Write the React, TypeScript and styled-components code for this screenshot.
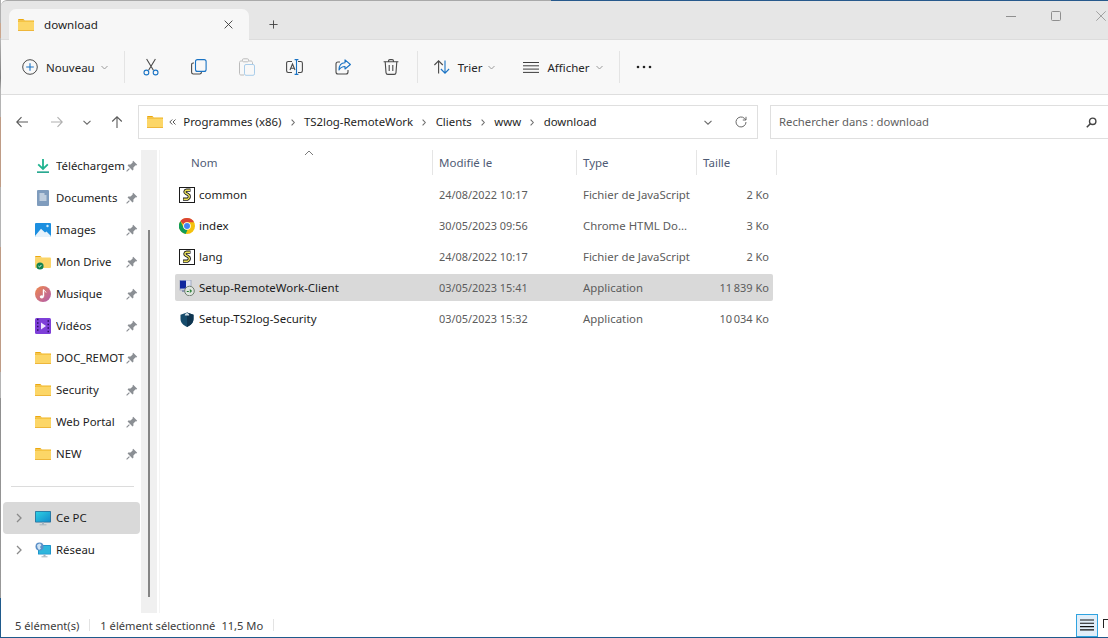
import React from 'react';
import styled, { createGlobalStyle } from 'styled-components';

const GlobalStyle = createGlobalStyle`
  html, body {
    margin: 0;
    padding: 0;
    height: 100%;
    overflow: hidden;
    background: #fff;
  }
  #root {
    height: 100%;
  }
`;

const FONT = `"Noto Sans", "Open Sans", "Liberation Sans", sans-serif`;

/* ---------- icons ---------- */

const Svg = styled.svg`
  display: block;
  flex: none;
`;

function FolderIcon() {
  return (
    <Svg width="16" height="16" viewBox="0 0 16 16">
      <path d="M0 3.200C0 2.500.5 2 1.200 2h3.600c.4 0 .7.2 1 .4L7 3.500H0z" fill="#eda90c" />
      <rect x="0" y="3.500" width="16" height="1.600" fill="#efb320" />
      <rect x="0" y="4.600" width="16" height="9.400" rx="1" fill="#fcd667" />
      <rect x="0" y="13" width="16" height="1" fill="#eeb63a" />
    </Svg>
  );
}

function DownloadIcon() {
  return (
    <Svg width="16" height="16" viewBox="0 0 16 16">
      <path d="M8 1v9.500M3.200 6.400 8 11l4.800-4.600" fill="none" stroke="#1fb38f" strokeWidth="1.800" />
      <rect x="2" y="13.400" width="12" height="1.500" fill="#13a085" />
    </Svg>
  );
}

function DocIcon() {
  return (
    <Svg width="16" height="16" viewBox="0 0 16 16">
      <rect x="2" y="0" width="12" height="16" rx="1" fill="#7f9cbd" />
      <path d="M4.500 4h5M4.500 6h7M4.500 8h7M4.500 10h7" stroke="#fff" strokeWidth="1" />
    </Svg>
  );
}

function ImageIcon() {
  return (
    <Svg width="16" height="16" viewBox="0 0 16 16">
      <rect x="0" y="1" width="16" height="14" rx="1" fill="#1c8fe0" />
      <path d="M0 14 6 6.800 10 10.500 11.500 9.400 16 14v.2c0 .5-.4.8-.8.8H.8C.4 15 0 14.700 0 14.200z" fill="#e8f3fb" />
      <circle cx="12.500" cy="4" r="1.200" fill="#d6ecfa" />
    </Svg>
  );
}

function DriveIcon() {
  return (
    <Svg width="16" height="16" viewBox="0 0 16 16">
      <path d="M0 3.200C0 2.500.5 2 1.200 2h3.600c.4 0 .7.2 1 .4L7 3.500H0z" fill="#eda90c" />
      <rect x="0" y="3.500" width="16" height="10.500" rx="1" fill="#fbd569" />
      <circle cx="5" cy="12" r="3.600" fill="#12824f" />
      <path d="M3.400 12l1.100 1.100 2-2.200" fill="none" stroke="#d8f2e3" strokeWidth="1" />
    </Svg>
  );
}

function MusicIcon() {
  return (
    <Svg width="16" height="16" viewBox="0 0 16 16">
      <defs>
        <linearGradient id="musicGrad" x1="0" y1="0" x2="1" y2="1">
          <stop offset="0" stopColor="#f0894a" />
          <stop offset="1" stopColor="#b05bb0" />
        </linearGradient>
      </defs>
      <circle cx="8" cy="8" r="8" fill="url(#musicGrad)" />
      <path d="M8.500 3.500v7" stroke="#fff" strokeWidth="1.400" />
      <path d="M8.500 3.500c.6 1.600 2.200 1.500 2.500 3" fill="none" stroke="#fff" strokeWidth="1" />
      <ellipse cx="6.800" cy="10.800" rx="2" ry="1.600" fill="#fff" />
    </Svg>
  );
}

function VideoIcon() {
  return (
    <Svg width="16" height="16" viewBox="0 0 16 16">
      <rect x="0" y="0" width="16" height="16" rx="1.500" fill="#7e3fd8" />
      <path d="M2 1.500h1.500M2 5h1.500M2 8.500h1.500M2 12h1.500M12.500 3h1.500M12.500 6.500h1.500M12.500 10h1.500M12.500 13.500h1.500" stroke="#2b0f60" strokeWidth="1.500" />
      <path d="M6 4.500v7L11 8z" fill="#efe4ff" />
    </Svg>
  );
}

function PinIcon() {
  return (
    <Svg width="12" height="12" viewBox="0 0 12 12">
      <path d="M7.200.8 11.200 4.800 10.300 5.500 9.600 5.300 7.400 7.500 7.400 9.700 6.500 10.400 1.600 5.500 2.300 4.600 4.500 4.600 6.700 2.400 6.500 1.700z" fill="#8b8f94" />
      <path d="M3.400 8.600.6 11.400" stroke="#8b8f94" strokeWidth="1.200" />
    </Svg>
  );
}

function MonitorIcon() {
  return (
    <Svg width="16" height="16" viewBox="0 0 16 16">
      <defs>
        <linearGradient id="screenGrad" x1="0" y1="0" x2="1" y2="1">
          <stop offset="0" stopColor="#2dd0e3" />
          <stop offset="1" stopColor="#138ccc" />
        </linearGradient>
      </defs>
      <rect x="0" y="1" width="16" height="11.500" rx=".8" fill="#2c6f99" />
      <rect x=".8" y="1.800" width="14.400" height="9.900" fill="url(#screenGrad)" />
      <rect x="7" y="12.500" width="2" height="2" fill="#9fb4c2" />
      <rect x="4.500" y="14.300" width="7" height="1" fill="#a5b4bd" />
    </Svg>
  );
}

function NetworkIcon() {
  return (
    <Svg width="16" height="16" viewBox="0 0 16 16">
      <rect x="3" y="3" width="13" height="9.500" rx=".6" fill="#1b8fc9" />
      <rect x="3.800" y="3.800" width="11.400" height="8" fill="#2fb6dc" />
      <rect x="8.500" y="12.500" width="2" height="2" fill="#9fb4c2" />
      <rect x="6.500" y="14.300" width="6" height="1" fill="#a5b4bd" />
      <circle cx="4.500" cy="4.500" r="4" fill="#5b8fc7" />
      <path d="M2 3c1-1 2-1.500 3-1.500L6.500 3 5 5 6 6.500 4 8 2.500 6z" fill="#cfe3f4" />
    </Svg>
  );
}

function ChevronRight() {
  return (
    <Svg width="8" height="10" viewBox="0 0 8 10">
      <path d="M2 1l4 4-4 4" fill="none" stroke="#8a8a8a" strokeWidth="1.300" />
    </Svg>
  );
}

function ScriptIcon() {
  return (
    <Svg width="16" height="16" viewBox="0 0 16 16">
      <rect x=".5" y=".5" width="15" height="15" fill="#fff" stroke="#1b1b1b" />
      <path d="M11.500 3.200H7.500C5.800 3.200 5.300 5.600 7 6.400l2.200 1.200C11 8.500 10.500 11.600 8.500 12.200H4" fill="none" stroke="#1b1b1b" strokeWidth="3.200" />
      <path d="M11 3.200H7.500C5.800 3.200 5.300 5.600 7 6.400l2.200 1.200C11 8.500 10.500 11.600 8.500 12.200H4.500" fill="none" stroke="#efe35a" strokeWidth="1.400" />
    </Svg>
  );
}

function ChromeIcon() {
  return (
    <Svg width="16" height="16" viewBox="0 0 16 16">
      <circle cx="8" cy="8" r="8" fill="#f4c20d" />
      <path d="M8 0a8 8 0 0 1 7 4.200H8A3.800 3.800 0 0 0 4.600 6.300L1.400 3.200A8 8 0 0 1 8 0z" fill="#db4437" />
      <path d="M1.400 3.200 4.600 9.500A3.800 3.800 0 0 0 8.500 11.800L6.700 15.900A8 8 0 0 1 1.400 3.200z" fill="#0f9d58" />
      <circle cx="8" cy="8" r="3.800" fill="#fff" />
      <circle cx="8" cy="8" r="3" fill="#4285f4" />
    </Svg>
  );
}

function ClientIcon() {
  return (
    <Svg width="16" height="16" viewBox="0 0 16 16">
      <rect x="1" y="0" width="11" height="10" fill="#dfe4f2" stroke="#8d97b5" strokeWidth=".7" />
      <rect x="1" y=".6" width="6" height="8" fill="#10289e" />
      <rect x="3" y="10" width="6" height="2" fill="#8d97b5" />
      <circle cx="10.500" cy="11" r="4.800" fill="#dfe5df" stroke="#6f7c6f" />
      <path d="M7.800 11.500h2M10.800 9.600l1.500 1.400-1.500 1.400" fill="none" stroke="#1d7a2a" strokeWidth="1.100" />
    </Svg>
  );
}

function ShieldIcon() {
  return (
    <Svg width="16" height="16" viewBox="0 0 16 16">
      <path d="M8 1.500 14.500 3.800V8c0 3.600-2.800 6.400-6.500 8-3.700-1.600-6.500-4.400-6.500-8V3.800z" fill="#164c6c" />
      <path d="M8 1.500 14.500 3.800V8c0 3.600-2.800 6.400-6.500 8z" fill="#0f3550" />
      <path d="M5.800 4.500C5.800 1 10.200 1 10.200 4.500z" fill="#d5e2ea" />
    </Svg>
  );
}

const Stroke = styled.g`
  fill: none;
  stroke: #4a4a4a;
  stroke-width: 1.100;
`;

const Accent = styled.g`
  fill: none;
  stroke: #1a73c4;
  stroke-width: 1.100;
`;

function NewIcon() {
  return (
    <Svg width="16" height="16" viewBox="0 0 16 16">
      <circle cx="8" cy="8" r="7.300" fill="none" stroke="#4a4a4a" strokeWidth="1" />
      <Accent>
        <path d="M8 4.200v7.600M4.200 8h7.600" />
      </Accent>
    </Svg>
  );
}

function CutIcon() {
  return (
    <Svg width="16" height="18" viewBox="0 0 16 18">
      <Stroke>
        <path d="M3.600 1 10.400 12.200M12.400 1 5.600 12.200" />
      </Stroke>
      <Accent>
        <circle cx="3.400" cy="14.500" r="2.400" />
        <circle cx="12.600" cy="14.500" r="2.400" />
      </Accent>
    </Svg>
  );
}

function CopyIcon() {
  return (
    <Svg width="16" height="16" viewBox="0 0 16 16">
      <Stroke>
        <path d="M3 4H2.300C1.300 4 .6 4.700.6 5.700v7.600c0 1 .7 1.700 1.700 1.700h6.400c1 0 1.700-.7 1.700-1.700V13" />
      </Stroke>
      <Accent>
        <rect x="4.500" y=".6" width="10.600" height="11.800" rx="2" />
      </Accent>
    </Svg>
  );
}

function PasteIcon() {
  return (
    <Svg width="16" height="18" viewBox="0 0 16 18">
      <g fill="none" stroke="#bcbcbc" strokeWidth="1">
        <path d="M3 3H2C1 3 .5 3.600.5 4.500v11C.5 16.400 1 17 2 17h3" />
        <path d="M10 3h2c.8 0 1.400.6 1.500 1.500V6" />
        <rect x="3.500" y=".8" width="6" height="3" rx="1" />
      </g>
      <rect x="5.500" y="6.500" width="10" height="10.800" rx="1.500" fill="none" stroke="#a9cdea" strokeWidth="1" />
    </Svg>
  );
}

function RenameIcon() {
  return (
    <Svg width="17" height="16" viewBox="0 0 17 16">
      <Stroke>
        <path d="M6 2.500H2.200C1.200 2.500.6 3.200.6 4.200v7.600c0 1 .6 1.700 1.600 1.700H6M12 2.500h2.800c1 0 1.600.7 1.600 1.700v7.600c0 1-.6 1.700-1.600 1.700H12" />
        <path d="M4 11 6.500 5l2.500 6M4.800 9.200h3.400" />
      </Stroke>
      <Accent>
        <path d="M10.500.6v14.800M8.600.6h3.800M8.600 15.400h3.800" />
      </Accent>
    </Svg>
  );
}

function ShareIcon() {
  return (
    <Svg width="16" height="16" viewBox="0 0 16 16">
      <Stroke>
        <path d="M5 3H3C1.800 3 1 3.800 1 5v8c0 1.200.8 2 2 2h8c1.200 0 2-.8 2-2v-2" />
      </Stroke>
      <Accent>
        <path d="M10 .8 15.400 5.500 10 10V7.500C7.500 7.500 5.500 8.500 4 11c0-4 2-7 6-7.200z" strokeLinejoin="round" />
      </Accent>
    </Svg>
  );
}

function TrashIcon() {
  return (
    <Svg width="16" height="16" viewBox="0 0 16 16">
      <Stroke>
        <path d="M.6 2.800h14.800M5.500 2.800V2c0-.8.600-1.400 1.400-1.400h2.200c.8 0 1.400.6 1.400 1.400v.8" />
        <path d="M2.200 2.800 3 13.600c.1 1 .8 1.800 1.800 1.800h6.400c1 0 1.700-.8 1.800-1.800l.8-10.800" />
        <path d="M6.200 6v6M9.800 6v6" />
      </Stroke>
    </Svg>
  );
}

function SortIcon() {
  return (
    <Svg width="16" height="14" viewBox="0 0 16 14">
      <Stroke>
        <path d="M4.600 13.500V1M.4 5 4.600 .8 8.800 5" />
      </Stroke>
      <Accent>
        <path d="M11 .5V13M6.900 9 11 13.200 15.100 9" />
      </Accent>
    </Svg>
  );
}

function ListIcon() {
  return (
    <Svg width="16" height="11" viewBox="0 0 16 11">
      <path d="M0 .5h16M0 3.800h16M0 7.100h16M0 10.400h16" stroke="#3d3d3d" strokeWidth="1" />
    </Svg>
  );
}

function MiniChevron() {
  return (
    <Svg width="7" height="5" viewBox="0 0 7 5">
      <path d="M.5 1 3.500 4 6.500 1" fill="none" stroke="#9a9a9a" strokeWidth="1" />
    </Svg>
  );
}

function ArrowLeft() {
  return (
    <Svg width="12" height="12" viewBox="0 0 12 12">
      <path d="M12 6H1M5.500 1.200 .8 6l4.700 4.800" fill="none" stroke="#5a5a5a" strokeWidth="1.100" />
    </Svg>
  );
}

function ArrowRight() {
  return (
    <Svg width="12" height="12" viewBox="0 0 12 12">
      <path d="M0 6h11M6.500 1.200 11.200 6 6.500 10.800" fill="none" stroke="#b0b0b0" strokeWidth="1.100" />
    </Svg>
  );
}

function ArrowUp() {
  return (
    <Svg width="12" height="12" viewBox="0 0 12 12">
      <path d="M6 12V1M1.200 5.500 6 .8l4.800 4.700" fill="none" stroke="#5a5a5a" strokeWidth="1.100" />
    </Svg>
  );
}

function NavChevron() {
  return (
    <Svg width="8" height="5" viewBox="0 0 8 5">
      <path d="M.5.8 4 4.200 7.500.8" fill="none" stroke="#6a6a6a" strokeWidth="1.100" />
    </Svg>
  );
}

function CrumbArrow() {
  return (
    <Svg width="4" height="7" viewBox="0 0 4 7">
      <path d="M.6.6 3.300 3.500.6 6.400" fill="none" stroke="#6e6e6e" strokeWidth="1.100" />
    </Svg>
  );
}

function DoubleChevron() {
  return (
    <Svg width="7" height="6" viewBox="0 0 7 6">
      <path d="M3.300.5.800 3l2.500 2.500M6.500.5 4 3l2.500 2.500" fill="none" stroke="#444" strokeWidth=".9" />
    </Svg>
  );
}

function RefreshIcon() {
  return (
    <Svg width="12" height="12" viewBox="0 0 12 12">
      <path d="M11 6a5 5 0 1 1-1.500-3.600L11 4M11 .8V4H7.800" fill="none" stroke="#6a6a6a" strokeWidth="1" />
    </Svg>
  );
}

function SearchIcon() {
  return (
    <Svg width="11" height="11" viewBox="0 0 11 11">
      <circle cx="6.700" cy="4.300" r="3.200" fill="none" stroke="#444" strokeWidth="1.400" />
      <path d="M4.300 6.700.8 10.200" stroke="#444" strokeWidth="1.600" />
    </Svg>
  );
}

/* ---------- window frame ---------- */

const Frame = styled.div`
  display: flex;
  width: 1108px;
  height: 638px;
  overflow: hidden;
`;

// one pixel of wallpaper and window shadow visible left of the window
const EdgeStrip = styled.div`
  width: 1px;
  flex: none;
  background: linear-gradient(
    to bottom,
    #b0b0b0 0,
    #b0b0b0 23px,
    #c9a58c 23px,
    #c9a58c 38px,
    #b8b8b8 38px,
    #7c7c7c 78px,
    #b4b4b4 90px,
    #b4b4b4 117px,
    #bf9c86 117px,
    #bf9c86 187px,
    #b4b4b4 187px,
    #b4b4b4 247px,
    #bf9c86 247px,
    #bf9c86 372px,
    #b4b4b4 372px,
    #b4b4b4 398px,
    #8f8f8f 398px,
    #999 598px,
    #1f5a8c 598px,
    #1f5a8c 638px
  );
`;

const Window = styled.div`
  display: flex;
  flex-direction: column;
  flex: 1;
  min-width: 0;
  font-family: ${FONT};
  font-size: 11.5px;
  color: #1c1c1c;
  background: #fff;
  border-bottom: 1px solid #1f5a8c;
  box-sizing: border-box;
`;

const TitleBar = styled.div`
  display: flex;
  align-items: flex-end;
  height: 40px;
  padding-left: 8px;
  flex: none;
  box-sizing: border-box;
  background: #e6e6e6;
  border-top: 1px solid #a9a9a9;
  border-bottom: 1px solid #dcdcdc;
  border-top-left-radius: 6px;
  position: relative;
`;

const TopAccent = styled.div`
  position: absolute;
  left: 550px;
  right: 0;
  top: -1px;
  height: 1px;
  background: #27598c;
`;

const Tab = styled.div`
  display: flex;
  align-items: center;
  width: 240px;
  height: 31px;
  margin-bottom: -1px;
  padding: 0 16px 0 9px;
  box-sizing: border-box;
  background: #f7f7f7;
  border-radius: 7px 7px 0 0;
`;

const TabTitle = styled.span`
  flex: 1;
  margin-left: 10px;
  font-size: 11.6px;
`;

const NewTab = styled.div`
  display: flex;
  align-items: center;
  justify-content: center;
  width: 9px;
  height: 9px;
  margin: 0 0 10px 20px;
  align-self: flex-end;
`;

const WindowControls = styled.div`
  display: flex;
  align-items: center;
  gap: 35px;
  margin-left: auto;
  margin-right: 2px;
  align-self: flex-start;
  height: 29px;
`;

const Toolbar = styled.div`
  display: flex;
  align-items: center;
  height: 55px;
  flex: none;
  padding-left: 21px;
  box-sizing: border-box;
  background: #f8f8f8;
  border-bottom: 1px solid #dedede;
`;

const ToolLabel = styled.span`
  margin: 0 6px 0 8px;
  font-size: 11.5px;
  color: #262626;
`;

const ToolGroup = styled.div<{ $left?: number }>`
  display: flex;
  align-items: center;
  margin-left: ${(p) => p.$left ?? 0}px;
`;

const ToolDivider = styled.div<{ $left: number; $right: number }>`
  width: 1px;
  height: 32px;
  background: #e4e4e4;
  margin: 0 ${(p) => p.$right}px 0 ${(p) => p.$left}px;
`;

const IconRow = styled.div`
  display: flex;
  align-items: center;
  gap: 24px;
`;

const IconSlot = styled.div`
  display: flex;
  align-items: center;
  justify-content: center;
  width: 24px;
`;

const AddressRow = styled.div`
  display: flex;
  align-items: flex-start;
  height: 55px;
  flex: none;
  padding-top: 10px;
  box-sizing: border-box;
`;

const NavButtons = styled.div`
  display: flex;
  align-items: center;
  width: 137px;
  height: 34px;
  padding-left: 15px;
  box-sizing: border-box;
  gap: 20px;
`;

const BackSlot = styled.div`
  width: 15px;
`;

const AddressBox = styled.div`
  display: flex;
  align-items: center;
  width: 620px;
  height: 34px;
  box-sizing: border-box;
  padding: 0 10px 0 8px;
  border: 1px solid #dfdfdf;
  font-size: 11.4px;
  color: #1e1e1e;
`;

const Overflow = styled.span`
  display: inline-flex;
  margin: 0 -2px 0 6px;
`;

const Crumb = styled.span`
  margin: 0 9.25px;
  padding-bottom: 2px;
  white-space: nowrap;
`;

const AddressTools = styled.div`
  display: flex;
  align-items: center;
  gap: 23px;
  margin-left: auto;
`;

const SearchBox = styled.div`
  display: flex;
  align-items: center;
  justify-content: space-between;
  width: 338px;
  height: 34px;
  margin-left: 12px;
  box-sizing: border-box;
  padding: 0 11px 0 8px;
  border: 1px solid #dfdfdf;
  border-right: none;
  font-size: 11.3px;
  color: #5f5f5f;
`;

const SearchText = styled.span`
  padding-bottom: 2px;
`;

/* ---------- body ---------- */

const Body = styled.div`
  display: flex;
  flex: 1;
  min-height: 0;
`;

const Sidebar = styled.div`
  width: 140px;
  flex: none;
  font-size: 11.4px;
`;

const QuickRow = styled.div`
  display: flex;
  align-items: center;
  height: 32px;
  padding-left: 34px;
  box-sizing: border-box;
`;

const QuickLabel = styled.span`
  width: 69px;
  margin-left: 5px;
  padding-bottom: 2px;
  overflow: hidden;
  white-space: nowrap;
`;

const PinSlot = styled.div`
  margin-left: 1px;
`;

const SideDivider = styled.div`
  height: 1px;
  margin: 16px 7px 15px 10px;
  background: #dcdcdc;
`;

const TreeRow = styled.div<{ $active?: boolean }>`
  display: flex;
  align-items: center;
  height: 32px;
  margin: 0 1px 0 2px;
  padding-left: 12px;
  box-sizing: border-box;
  border-radius: 4px;
  background: ${(p) => (p.$active ? '#d9d9d9' : 'transparent')};
`;

const TreeIconSlot = styled.div`
  margin: 0 5px 0 12px;
`;

const TreeLabel = styled.span`
  padding-bottom: 2px;
`;

const ScrollTrack = styled.div`
  position: relative;
  width: 16px;
  flex: none;
  background: #f0f0f0;
`;

const ScrollThumb = styled.div`
  position: absolute;
  left: 7px;
  top: 80px;
  width: 2px;
  height: 367px;
  background: #858585;
`;

const Main = styled.div`
  flex: 1;
  min-width: 0;
  margin-left: 2px;
  border-left: 1px solid #f4f4f4;
  position: relative;
`;

const HeaderRow = styled.div`
  display: flex;
  height: 25px;
  margin-bottom: 6px;
`;

const HeaderCell = styled.div<{ $width: number; $pad: number }>`
  display: flex;
  align-items: center;
  width: ${(p) => p.$width}px;
  padding-left: ${(p) => p.$pad}px;
  box-sizing: border-box;
  border-right: 1px solid #e5e5e5;
  color: #4f5b75;
  font-size: 11.5px;
`;

const SortCaret = styled.div`
  position: absolute;
  left: 144px;
  top: 0;
`;

const FileRow = styled.div<{ $selected?: boolean }>`
  display: grid;
  grid-template-columns: 264px 144px 120px 70px;
  align-items: center;
  width: 598px;
  height: 27px;
  margin: 0 0 4px 15px;
  border-radius: 2px;
  background: ${(p) => (p.$selected ? '#d9d9d9' : 'transparent')};
`;

const NameCell = styled.div`
  display: flex;
  align-items: center;
  gap: 4px;
  padding-left: 4px;
`;

const DetailCell = styled.div<{ $size?: number }>`
  color: #5c5c5c;
  font-size: ${(p) => p.$size ?? 11.4}px;
  white-space: nowrap;
`;

const SizeCell = styled(DetailCell)`
  text-align: right;
  padding-right: 4px;
`;

/* ---------- status bar ---------- */

const StatusBar = styled.div`
  display: flex;
  align-items: center;
  height: 24px;
  flex: none;
  padding-left: 14px;
  font-size: 11.15px;
  color: #3c3c3c;
  box-sizing: border-box;
`;

const StatusSep = styled.div`
  width: 1px;
  height: 12px;
  background: #e3e3e3;
  margin: 0 10px;
`;

const StatusSize = styled.span`
  margin-left: 6px;
`;

const StatusViews = styled.div`
  display: flex;
  align-items: center;
  margin-left: auto;
  height: 100%;
`;

const ViewToggle = styled.div`
  display: flex;
  align-items: center;
  justify-content: center;
  width: 22px;
  height: 23px;
  box-sizing: border-box;
  border: 1px solid #2fa3e0;
  background: #e1eef9;
`;

const TilesGlyph = styled.div`
  width: 10px;
  height: 9px;
  margin: 0 -5px 4px 5px;
  border: 1px solid #222;
  border-bottom: none;
  box-sizing: border-box;
`;

const quick = [
  { label: 'Téléchargem', icon: <DownloadIcon /> },
  { label: 'Documents', icon: <DocIcon /> },
  { label: 'Images', icon: <ImageIcon /> },
  { label: 'Mon Drive', icon: <DriveIcon /> },
  { label: 'Musique', icon: <MusicIcon /> },
  { label: 'Vidéos', icon: <VideoIcon /> },
  { label: 'DOC_REMOT', icon: <FolderIcon /> },
  { label: 'Security', icon: <FolderIcon /> },
  { label: 'Web Portal', icon: <FolderIcon /> },
  { label: 'NEW', icon: <FolderIcon /> },
];

const files = [
  { name: 'common', date: '24/08/2022 10:17', type: 'Fichier de JavaScript', size: '2 Ko', icon: <ScriptIcon /> },
  { name: 'index', date: '30/05/2023 09:56', type: 'Chrome HTML Do...', size: '3 Ko', icon: <ChromeIcon /> },
  { name: 'lang', date: '24/08/2022 10:17', type: 'Fichier de JavaScript', size: '2 Ko', icon: <ScriptIcon /> },
  { name: 'Setup-RemoteWork-Client', date: '03/05/2023 15:41', type: 'Application', size: '11\u202f839 Ko', icon: <ClientIcon />, selected: true },
  { name: 'Setup-TS2log-Security', date: '03/05/2023 15:32', type: 'Application', size: '10\u202f034 Ko', icon: <ShieldIcon /> },
];

const crumbs = ['Programmes (x86)', 'TS2log-RemoteWork', 'Clients', 'www', 'download'];

export default function App() {
  return (
    <Frame>
      <GlobalStyle />
      <EdgeStrip />
      <Window>
        <TitleBar>
          <TopAccent />
          <Tab>
            <FolderIcon />
            <TabTitle>download</TabTitle>
            <Svg width="9" height="9" viewBox="0 0 10 10">
              <path d="M.7.7l8.600 8.600M9.300.7.700 9.300" stroke="#3a3a3a" strokeWidth="1" />
            </Svg>
          </Tab>
          <NewTab>
            <Svg width="9" height="9" viewBox="0 0 11 11">
              <path d="M5.500.5v10M.5 5.500h10" stroke="#3f3f3f" strokeWidth="1.100" />
            </Svg>
          </NewTab>
          <WindowControls>
            <Svg width="10" height="10" viewBox="0 0 10 10">
              <path d="M0 5.500h10" stroke="#8f8f8f" strokeWidth="1" />
            </Svg>
            <Svg width="10" height="10" viewBox="0 0 10 10">
              <rect x=".5" y=".5" width="9" height="9" rx="1" fill="none" stroke="#8f8f8f" />
            </Svg>
            <Svg width="10" height="10" viewBox="0 0 10 10">
              <path d="M.3.3l9.400 9.400M9.700.3.300 9.700" stroke="#9a9a9a" strokeWidth=".9" />
            </Svg>
          </WindowControls>
        </TitleBar>

        <Toolbar>
          <ToolGroup>
            <NewIcon />
            <ToolLabel>Nouveau</ToolLabel>
            <MiniChevron />
          </ToolGroup>
          <ToolDivider $left={16} $right={14} />
          <IconRow>
            <IconSlot><CutIcon /></IconSlot>
            <IconSlot><CopyIcon /></IconSlot>
            <IconSlot><PasteIcon /></IconSlot>
            <IconSlot><RenameIcon /></IconSlot>
            <IconSlot><ShareIcon /></IconSlot>
            <IconSlot><TrashIcon /></IconSlot>
          </IconRow>
          <ToolDivider $left={14} $right={16} />
          <ToolGroup>
            <SortIcon />
            <ToolLabel>Trier</ToolLabel>
            <MiniChevron />
          </ToolGroup>
          <ToolGroup $left={28}>
            <ListIcon />
            <ToolLabel>Afficher</ToolLabel>
            <MiniChevron />
          </ToolGroup>
          <ToolDivider $left={16} $right={16} />
          <Svg width="16" height="4" viewBox="0 0 16 4">
            <circle cx="2" cy="2" r="1.300" fill="#222" />
            <circle cx="8" cy="2" r="1.300" fill="#222" />
            <circle cx="14" cy="2" r="1.300" fill="#222" />
          </Svg>
        </Toolbar>

        <AddressRow>
          <NavButtons>
            <BackSlot><ArrowLeft /></BackSlot>
            <ArrowRight />
            <NavChevron />
            <ArrowUp />
          </NavButtons>
          <AddressBox>
            <FolderIcon />
            <Overflow><DoubleChevron /></Overflow>
            {crumbs.map((c, i) => (
              <React.Fragment key={c}>
                {i > 0 && <CrumbArrow />}
                <Crumb>{c}</Crumb>
              </React.Fragment>
            ))}
            <AddressTools>
              <NavChevron />
              <RefreshIcon />
            </AddressTools>
          </AddressBox>
          <SearchBox>
            <SearchText>Rechercher dans : download</SearchText>
            <SearchIcon />
          </SearchBox>
        </AddressRow>

        <Body>
          <Sidebar>
            {quick.map((q) => (
              <QuickRow key={q.label}>
                {q.icon}
                <QuickLabel>{q.label}</QuickLabel>
                <PinSlot><PinIcon /></PinSlot>
              </QuickRow>
            ))}
            <SideDivider />
            <TreeRow $active>
              <ChevronRight />
              <TreeIconSlot><MonitorIcon /></TreeIconSlot>
              <TreeLabel>Ce PC</TreeLabel>
            </TreeRow>
            <TreeRow>
              <ChevronRight />
              <TreeIconSlot><NetworkIcon /></TreeIconSlot>
              <TreeLabel>Réseau</TreeLabel>
            </TreeRow>
          </Sidebar>
          <ScrollTrack>
            <ScrollThumb />
          </ScrollTrack>
          <Main>
            <HeaderRow>
              <HeaderCell $width={273} $pad={31}>Nom</HeaderCell>
              <HeaderCell $width={144} $pad={6}>Modifié le</HeaderCell>
              <HeaderCell $width={120} $pad={6}>Type</HeaderCell>
              <HeaderCell $width={80} $pad={6}>Taille</HeaderCell>
            </HeaderRow>
            <SortCaret>
              <Svg width="10" height="6" viewBox="0 0 10 6">
                <path d="M1 5 5 1l4 4" fill="none" stroke="#7a7a7a" strokeWidth="1" />
              </Svg>
            </SortCaret>
            {files.map((f) => (
              <FileRow key={f.name} $selected={f.selected}>
                <NameCell>
                  {f.icon}
                  {f.name}
                </NameCell>
                <DetailCell $size={10.9}>{f.date}</DetailCell>
                <DetailCell>{f.type}</DetailCell>
                <SizeCell $size={11}>{f.size}</SizeCell>
              </FileRow>
            ))}
          </Main>
        </Body>

        <StatusBar>
          <span>5 élément(s)</span>
          <StatusSep />
          <span>1 élément sélectionné</span>
          <StatusSize>11,5 Mo</StatusSize>
          <StatusSep />
          <StatusViews>
            <ViewToggle>
              <Svg width="14" height="12" viewBox="0 0 14 12">
                <path d="M0 1h14M0 4.300h14M0 7.600h14M0 10.900h14" stroke="#111" strokeWidth="1.100" />
              </Svg>
            </ViewToggle>
            <TilesGlyph />
          </StatusViews>
        </StatusBar>
      </Window>
    </Frame>
  );
}
